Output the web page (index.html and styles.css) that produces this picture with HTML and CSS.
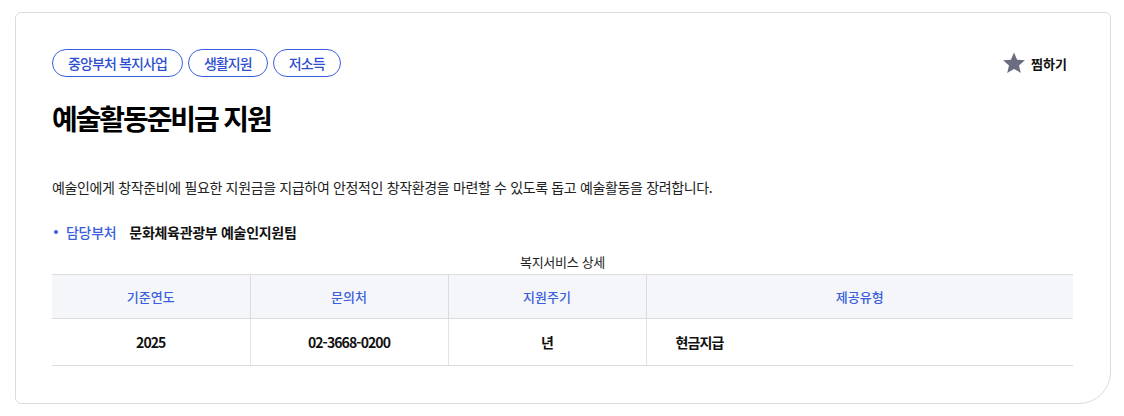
FILE: index.html
```html
<!DOCTYPE html>
<html lang="ko">
<head>
<meta charset="utf-8">
<link rel="stylesheet" href="styles.css">
</head>
<body>
<div class="card">
  <div class="top">
    <div class="tags">
      <span class="tag">중앙부처 복지사업</span>
      <span class="tag">생활지원</span>
      <span class="tag">저소득</span>
    </div>
    <button class="fav">
      <svg width="24" height="24" viewBox="0 0 24 24"><path d="M12 1.5l3.1 7.2 7.8.6-5.9 5.1 1.8 7.6L12 17.9 5.2 22l1.8-7.6-5.9-5.1 7.8-.6z" fill="#6b6e80"/></svg>
      <span>찜하기</span>
    </button>
  </div>
  <h1 class="title">예술활동준비금 지원</h1>
  <p class="desc">예술인에게 창작준비에 필요한 지원금을 지급하여 안정적인 창작환경을 마련할 수 있도록 돕고 예술활동을 장려합니다.</p>
  <div class="dept"><span class="dot"></span><span class="dlabel">담당부처</span><span class="dval">문화체육관광부 예술인지원팀</span></div>
  <table class="tbl">
    <caption>복지서비스 상세</caption>
    <thead>
      <tr><th class="c1">기준연도</th><th class="c1">문의처</th><th class="c1">지원주기</th><th>제공유형</th></tr>
    </thead>
    <tbody>
      <tr><td>2025</td><td>02-3668-0200</td><td>년</td><td class="left">현금지급</td></tr>
    </tbody>
  </table>
</div>
</body>
</html>
```
FILE: styles.css
```css
* { box-sizing: border-box; }
html, body { margin: 0; background: #fff; }
body {
  padding: 12px 14px 12px 15px;
  font-family: "Noto Sans CJK KR", "Noto Sans", sans-serif;
  color: #111;
}
.card {
  width: 1096px;
  height: 392px;
  border: 1px solid #dcdcdf;
  border-radius: 6px 6px 32px 6px;
  padding: 36px 36px 0 36px;
}
.top {
  display: flex;
  justify-content: space-between;
  align-items: center;
}
.tags { display: flex; gap: 5px; }
.tag {
  display: inline-flex;
  align-items: center;
  height: 28px;
  padding: 0 15px;
  border: 1px solid #3b5fdc;
  border-radius: 14px;
  color: #2d4fcf;
  font-size: 14px;
  font-weight: 500;
  letter-spacing: -0.9px;
  line-height: 1;
}
.fav {
  display: flex;
  align-items: center;
  gap: 5px;
  margin-right: 7px;
  border: 0;
  background: none;
  padding: 0;
  font-family: inherit;
  font-size: 13px;
  font-weight: 700;
  color: #111;
}
.title {
  margin: 21px 0 0;
  font-size: 28px;
  line-height: 40px;
  font-weight: 700;
  letter-spacing: -2.1px;
  color: #000;
}
.desc {
  margin: 39px 0 0;
  font-size: 14px;
  line-height: 20px;
  color: #222;
  letter-spacing: -0.35px;
}
.dept {
  display: flex;
  align-items: center;
  margin-top: 25px;
  font-size: 14px;
  line-height: 20px;
  letter-spacing: -0.3px;
}
.dot {
  width: 4px; height: 4px; border-radius: 50%;
  background: #3b5fdc;
  margin: 0 8px 0 2px;
}
.dlabel { color: #3b5fdc; font-weight: 500; margin-right: 13px; }
.dval { font-weight: 700; color: #111; }
.tbl {
  width: 1021px;
  border-collapse: collapse;
  margin-top: 11px;
  font-size: 13px;
  table-layout: fixed;
}
.tbl caption {
  font-size: 13px;
  line-height: 18px;
  padding-bottom: 3px;
  color: #222;
  letter-spacing: -0.3px;
}
.tbl th {
  height: 44px;
  background: #f5f6fa;
  color: #3b5fdc;
  font-weight: 500;
  font-size: 13px;
  border-top: 1px solid #dcdcdf;
  border-bottom: 1px solid #dcdcdf;
  border-left: 1px solid #dcdcdf;
}
.tbl th:first-child, .tbl td:first-child { border-left: 0; }
.tbl th.c1 { width: 198px; }
.tbl td {
  height: 47px;
  text-align: center;
  font-weight: 700;
  font-size: 14px;
  letter-spacing: -0.9px;
  color: #111;
  border-left: 1px solid #e3e3e6;
  border-bottom: 1px solid #dcdcdf;
}
.tbl td.left { text-align: left; padding-left: 29px; }
```
